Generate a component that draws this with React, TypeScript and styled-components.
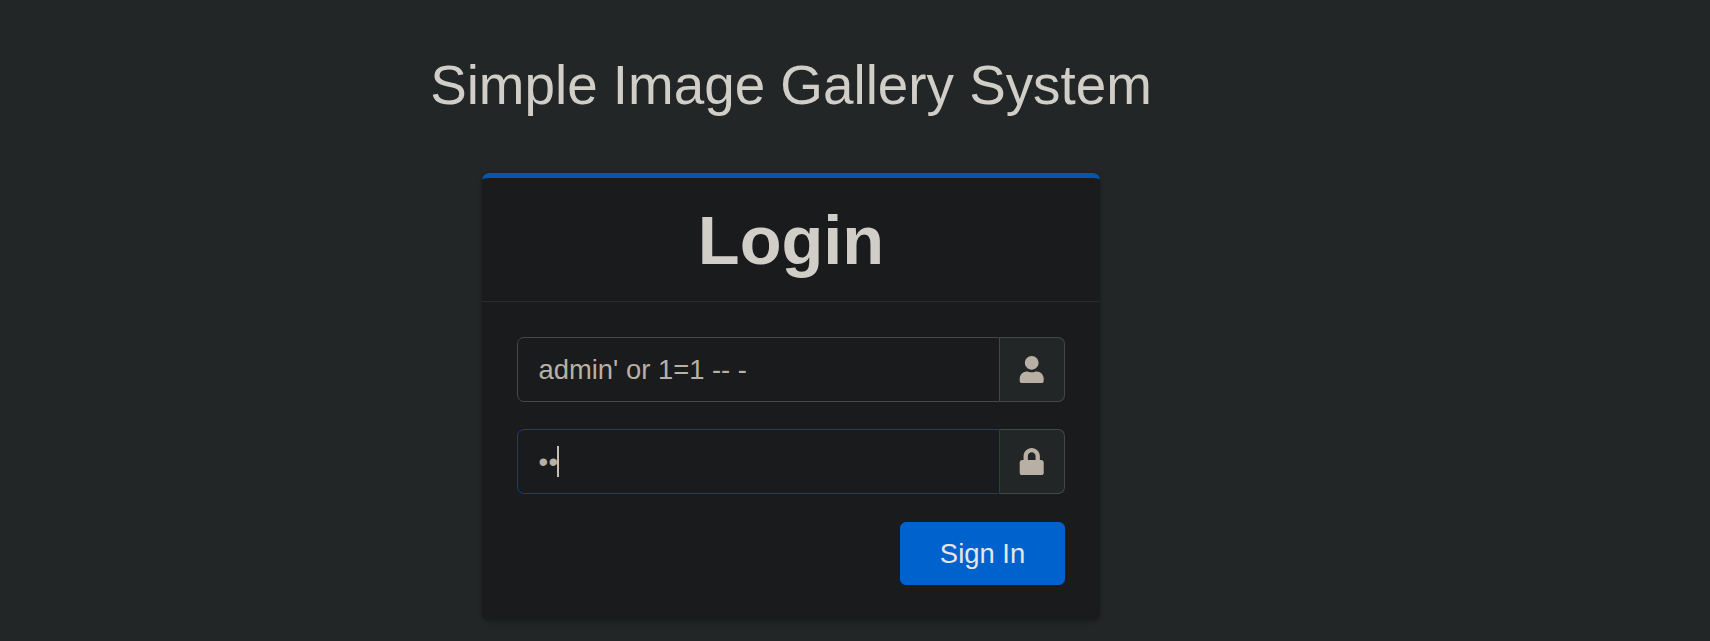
import React from "react";
import styled, { createGlobalStyle } from "styled-components";
import { FaLock, FaUser } from "react-icons/fa";

const GlobalStyle = createGlobalStyle`
  *, *::before, *::after { box-sizing: border-box; }
  body {
    margin: 0;
    background: #222627;
    font-family: "Liberation Sans", Arial, sans-serif;
    font-size: 27.4px;
    line-height: 1.5;
    overflow: hidden;
  }
`;

const Page = styled.main`
  display: flex;
  flex-direction: column;
  align-items: center;
  height: 641px;
  padding: 52px 128px 0 0;
`;

const SiteTitle = styled.h1`
  margin: 0 0 55px;
  font-size: 54.8px;
  font-weight: 400;
  line-height: 66px;
  color: #d1cdc7;
  white-space: nowrap;
`;

const Card = styled.section`
  width: 618px;
  height: 447px;
  background: #1a1b1c;
  border-top: 5px solid #0057b3;
  border-radius: 7px;
  box-shadow: 0 0 2px rgba(0, 0, 0, 0.13), 0 2px 5px rgba(0, 0, 0, 0.2);
`;

const CardHeader = styled.header`
  height: 124px;
  padding-top: 22px;
  border-bottom: 1px solid #2a2b2c;
  text-align: center;
`;

const CardTitle = styled.h2`
  margin: 0;
  font-size: 68.5px;
  font-weight: 700;
  line-height: 82px;
  color: #d1cdc7;
`;

const Form = styled.div`
  display: flex;
  flex-direction: column;
  gap: 27px;
  padding: 35px 35px 0;
`;

const InputGroup = styled.div`
  display: flex;
  height: 65px;
`;

const Field = styled.div<{ $focused?: boolean }>`
  display: flex;
  flex: 1;
  align-items: center;
  padding-left: 20.5px;
  border: 1px solid ${({ $focused }) => ($focused ? "#00458f" : "#45484a")};
  border-radius: 7px 0 0 7px;
  color: #b8b0a5;
  white-space: pre;
`;

const Password = styled.span`
  margin-right: -1px;
  letter-spacing: 0.4px;
`;

const Caret = styled.span`
  width: 2px;
  height: 31px;
  background: #c4beb5;
`;

const Addon = styled.div`
  display: flex;
  align-items: center;
  justify-content: center;
  width: 65px;
  border: 1px solid #45484a;
  border-left: 0;
  border-radius: 0 7px 7px 0;
  background: #222627;
  color: #b8b0a5;
`;

const SignInButton = styled.button`
  align-self: flex-end;
  width: 165px;
  height: 63px;
  margin-top: 1px;
  padding: 0;
  border: 1px solid #0062cc;
  border-radius: 6px;
  background: #0062cc;
  color: #e8e6e3;
  font: inherit;
`;

export default function App() {
  return (
    <>
      <GlobalStyle />
      <Page>
        <SiteTitle>Simple Image Gallery System</SiteTitle>
        <Card>
          <CardHeader>
            <CardTitle>Login</CardTitle>
          </CardHeader>
          <Form>
            <InputGroup>
              <Field>admin' or 1=1 -- -</Field>
              <Addon>
                <FaUser size={27.45} />
              </Addon>
            </InputGroup>
            <InputGroup>
              <Field $focused>
                <Password>••</Password>
                <Caret />
              </Field>
              <Addon>
                <FaLock size={27.45} />
              </Addon>
            </InputGroup>
            <SignInButton type="button">Sign In</SignInButton>
          </Form>
        </Card>
      </Page>
    </>
  );
}
